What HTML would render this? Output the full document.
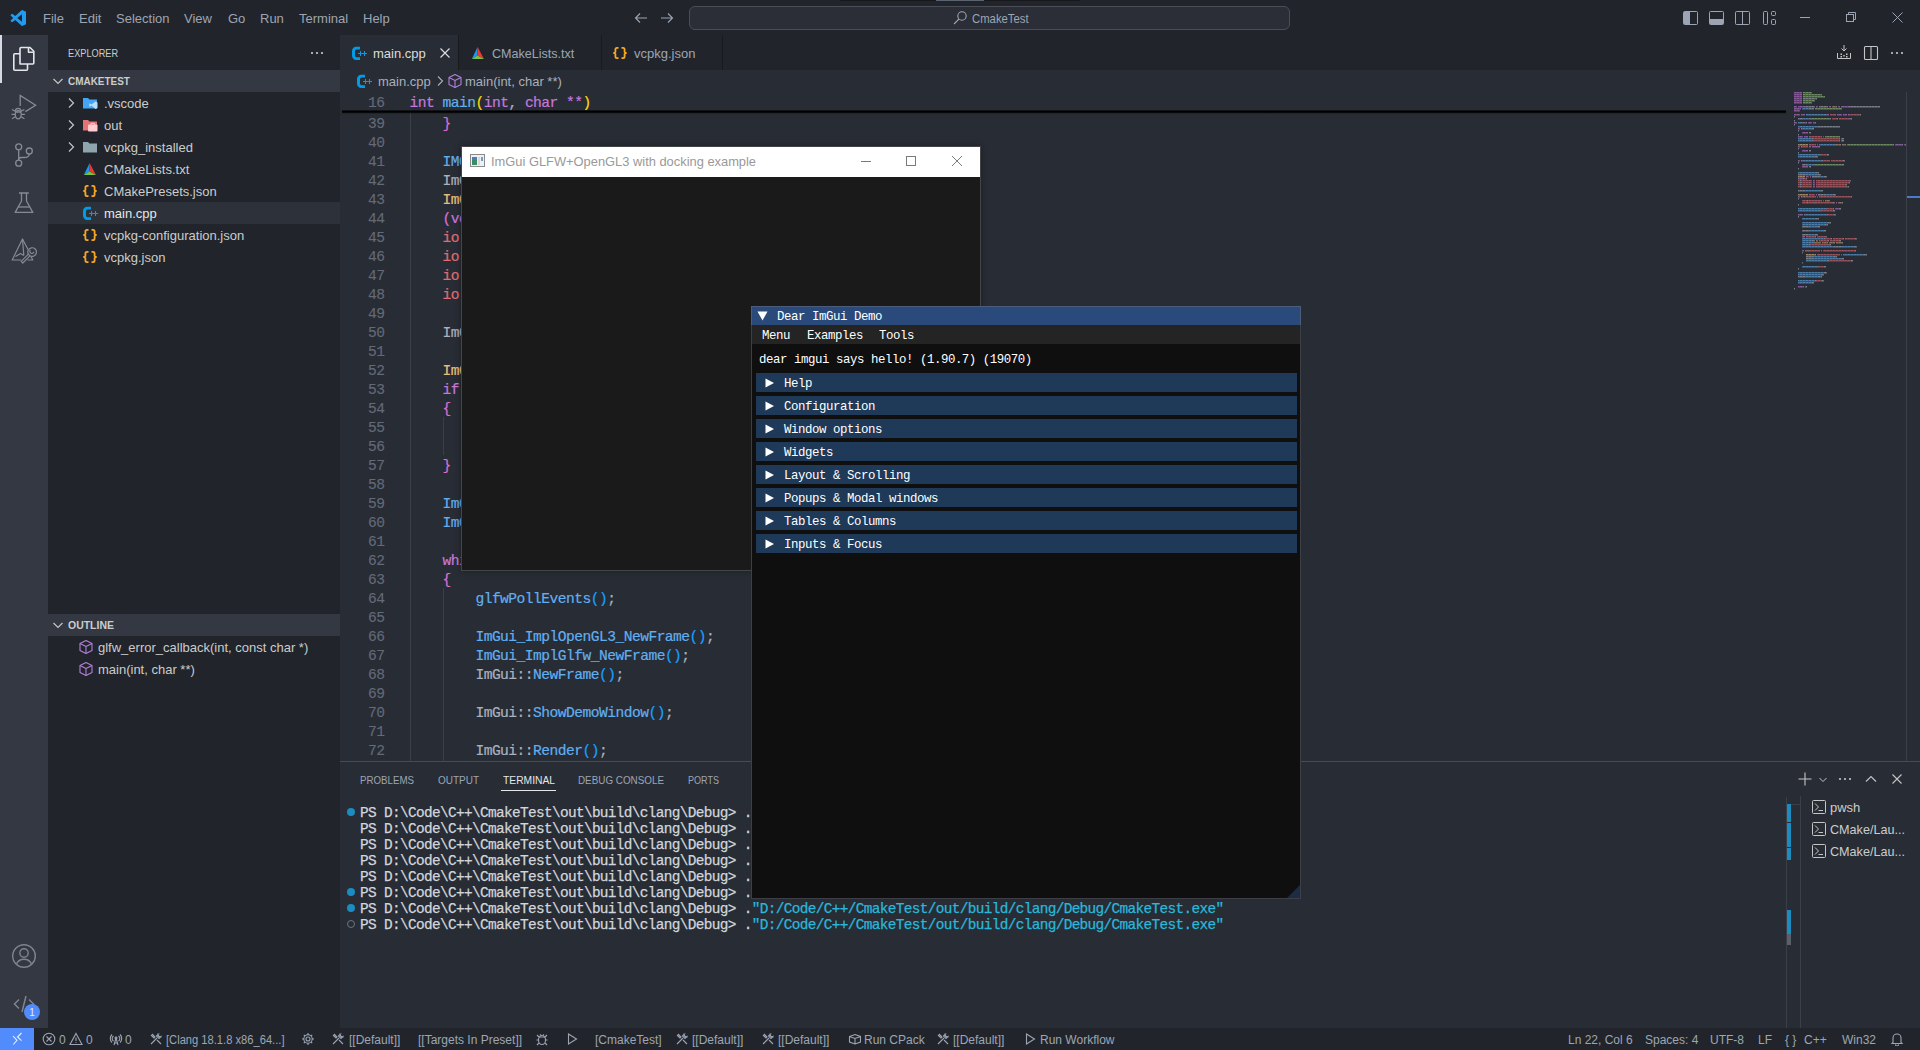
<!DOCTYPE html>
<html><head><meta charset="utf-8">
<style>
*{margin:0;padding:0;box-sizing:border-box}
html,body{width:1920px;height:1050px;overflow:hidden;background:#282c34;font-family:"Liberation Sans",sans-serif;font-size:13px;color:#9da5b4}
.a{position:absolute}
.mono{font-family:"Liberation Mono",monospace}
#title{left:0;top:0;width:1920px;height:35px;background:#21252b}
#act{left:0;top:35px;width:48px;height:993px;background:#333842}
#side{left:48px;top:35px;width:292px;height:993px;background:#21252b}
#tabs{left:340px;top:35px;width:1580px;height:35px;background:#21252b}
#editor{left:340px;top:70px;width:1580px;height:691px;background:#282c34}
#panel{left:340px;top:761px;width:1580px;height:267px;background:#282c34;border-top:1px solid #474b52}
#status{left:0;top:1028px;width:1920px;height:22px;background:#21252b}
.menu span{position:absolute;top:11px;color:#9da5b4}
.ln{position:absolute;left:340px;width:44.5px;text-align:right;color:#636a78;font-family:"Liberation Mono",monospace;font-size:14.6px;letter-spacing:-0.52px;line-height:19px;-webkit-text-stroke:0.15px currentColor}
.code{position:absolute;left:409.5px;font-family:"Liberation Mono",monospace;font-size:14.6px;letter-spacing:-0.52px;line-height:19px;white-space:pre;color:#abb2bf;-webkit-text-stroke:0.2px currentColor}
.k{color:#c678dd}.f{color:#61afef}.t{color:#e5c07b}.v{color:#e06c75}.s{color:#98c379}.p{color:#abb2bf}
.b1{color:#ffd700}.b2{color:#da70d6}.b3{color:#179fff}
.row{position:absolute;left:48px;width:292px;height:22px;line-height:22px;color:#d7dae0}
.term{position:absolute;left:360px;font-family:"Liberation Mono",monospace;font-size:14.4px;letter-spacing:-0.64px;line-height:16px;white-space:pre;color:#d2d6dc;-webkit-text-stroke:0.25px currentColor}
.sb{position:absolute;top:1029px;height:22px;line-height:22px;color:#9da5b4;font-size:12px;white-space:pre}
.ig{font-family:"Liberation Mono",monospace;font-size:12.4px;letter-spacing:-0.44px;color:#fff;white-space:pre}
</style></head><body>
<div id="title" class="a">
<svg class="a" style="left:10px;top:10px" width="16" height="16" viewBox="0 0 100 100"><path fill="#1f9cf0" fill-rule="evenodd" d="M74.9 99.3a6 6 0 0 0 4.8-.2l20.6-9.9a6.2 6.2 0 0 0 3.5-5.6V16.4a6.2 6.2 0 0 0-3.5-5.6L79.7.9a6.2 6.2 0 0 0-7.1 1.2L33.1 38.1 15.9 25.1a4.1 4.1 0 0 0-5.3.2L5.1 30.4a4.1 4.1 0 0 0 0 6.1L20 50 5.1 63.5a4.1 4.1 0 0 0 0 6.1l5.5 5a4.1 4.1 0 0 0 5.3.2l17.2-13L72.6 97.9a6.2 6.2 0 0 0 2.3 1.4ZM75 27.3 45.1 50 75 72.7Z"/></svg>
<div class="menu">
<span style="left:43px">File</span><span style="left:79px">Edit</span><span style="left:116px">Selection</span><span style="left:184px">View</span><span style="left:228px">Go</span><span style="left:260px">Run</span><span style="left:299px">Terminal</span><span style="left:363px">Help</span>
</div>
<svg class="a" style="left:633px;top:10px" width="16" height="16" viewBox="0 0 16 16" fill="none" stroke="#9da5b4" stroke-width="1.1"><path d="M14 8H2.5M7 3.5L2.5 8L7 12.5"/></svg>
<svg class="a" style="left:659px;top:10px" width="16" height="16" viewBox="0 0 16 16" fill="none" stroke="#9da5b4" stroke-width="1.1"><path d="M2 8H13.5M9 3.5L13.5 8L9 12.5"/></svg>
<div class="a" style="left:689px;top:6px;width:601px;height:24px;border:1px solid #4a4e57;border-radius:6px;background:#2b2e36"></div>
<svg class="a" style="left:952px;top:10px" width="16" height="16" viewBox="0 0 16 16" fill="none" stroke="#9da5b4" stroke-width="1.1"><circle cx="10" cy="6" r="4.2"/><path d="M7 9L2 14"/></svg>
<span class="a" style="left:972px;top:11px;color:#9da5b4;transform:scaleX(0.87);transform-origin:0 0">CmakeTest</span>
<div class="a" style="left:840px;top:0;width:240px;height:1px;background:#16181c"></div><div class="a" style="left:936px;top:0;width:48px;height:1px;background:#5b6270"></div>
<svg class="a" style="left:1683px;top:11px" width="16" height="14" viewBox="0 0 16 14" fill="none" stroke="#9da5b4" stroke-width="1"><rect x="0.5" y="0.5" width="14" height="13" rx="1"/><rect x="1" y="1" width="6" height="12" fill="#9da5b4" stroke="none"/></svg>
<svg class="a" style="left:1709px;top:11px" width="16" height="14" viewBox="0 0 16 14" fill="none" stroke="#9da5b4" stroke-width="1"><rect x="0.5" y="0.5" width="14" height="13" rx="1"/><rect x="1" y="8" width="13" height="5" fill="#9da5b4" stroke="none"/></svg>
<svg class="a" style="left:1735px;top:11px" width="16" height="14" viewBox="0 0 16 14" fill="none" stroke="#9da5b4" stroke-width="1"><rect x="0.5" y="0.5" width="14" height="13" rx="1"/><path d="M7.5 0.5V13.5"/></svg>
<svg class="a" style="left:1762px;top:11px" width="16" height="14" viewBox="0 0 16 14" fill="none" stroke="#9da5b4" stroke-width="1"><rect x="1.5" y="0.5" width="4" height="13" rx="1"/><rect x="9.5" y="0.5" width="4" height="4" rx="1"/><rect x="9.5" y="8.5" width="4" height="5" rx="1"/></svg>
<div class="a" style="left:1800px;top:17px;width:10px;height:1px;background:#9da5b4"></div>
<svg class="a" style="left:1845px;top:11px" width="12" height="12" viewBox="0 0 12 12" fill="none" stroke="#9da5b4" stroke-width="1"><rect x="1.5" y="3.5" width="7" height="7"/><path d="M3.5 3.5V1.5H10.5V8.5H8.5"/></svg>
<svg class="a" style="left:1892px;top:12px" width="11" height="11" viewBox="0 0 11 11" fill="none" stroke="#9da5b4" stroke-width="1"><path d="M0.5 0.5L10.5 10.5M10.5 0.5L0.5 10.5"/></svg>
</div>
<div id="act" class="a">
<div class="a" style="left:0;top:0;width:2px;height:48px;background:#d7dae0"></div>
<svg class="a" style="left:8px;top:7px" width="32" height="32" viewBox="0 0 32 32" fill="none" stroke="#e4e6eb" stroke-width="1.6" stroke-linejoin="round"><path d="M12 22V6.5A1 1 0 0 1 13 5.5H22L25.8 9.3V21A1 1 0 0 1 24.8 22Z"/><path d="M20.5 5.5V10.3H25.8"/><path d="M12 11.8H6.8A1 1 0 0 0 5.8 12.8V27.3A1 1 0 0 0 6.8 28.3H18.5A1 1 0 0 0 19.5 27.3V22"/></svg>
<svg class="a" style="left:8px;top:55px" width="32" height="32" viewBox="0 0 32 32" fill="none" stroke="#858b96" stroke-width="1.3" stroke-linejoin="miter"><path d="M12.2 16V5.4L27.6 15.2L17.4 21.6"/><path d="M7.2 21.5A3 3.2 0 0 1 13.2 21.5"/><ellipse cx="10.2" cy="24.6" rx="3" ry="4.2"/><path d="M7.2 22H13.2M4 19.5L7.2 21.3M3.5 24.3H7.2M4 28.8L7.3 26.8M16.4 19.5L13.2 21.3M16.9 24.3H13.2M16.4 28.8L13.1 26.8"/></svg>
<svg class="a" style="left:8px;top:103px" width="32" height="32" viewBox="0 0 32 32" fill="none" stroke="#858b96" stroke-width="1.3"><circle cx="10.7" cy="8.8" r="3"/><circle cx="10.7" cy="25.2" r="3"/><circle cx="21.3" cy="13" r="3"/><path d="M10.7 11.8V22.2M21.3 16C21.3 18.5 19.5 19.5 16 19.5H13C11.5 19.5 10.7 20.5 10.7 22"/></svg>
<svg class="a" style="left:8px;top:151px" width="32" height="32" viewBox="0 0 32 32" fill="none" stroke="#858b96" stroke-width="1.3" stroke-linejoin="round"><path d="M11 7H20.8M13.5 7V15L7.2 26.4H24.8L18.5 15V7"/><path d="M10.3 21H21.7"/></svg>
<svg class="a" style="left:8px;top:199px" width="32" height="32" viewBox="0 0 32 32" fill="none" stroke="#858b96" stroke-width="1.2" stroke-linejoin="round"><path d="M20 15.5L14.5 5L4.2 26H13M19.5 26H24.8L23 22.5"/><path d="M14.5 5L15.8 21.5M7.5 22.5L12.5 19.5L15.8 21.5"/><path d="M13.2 27.4L20.4 20.2L22 21.8L14.8 29Z"/><path d="M20.4 20.2A4.3 4.3 0 1 1 22 21.8"/><path d="M22.3 16.2A2 2 0 1 0 25.8 17.8"/></svg>
<svg class="a" style="left:11px;top:908px" width="26" height="26" viewBox="0 0 26 26" fill="none" stroke="#7f848e" stroke-width="1.4"><circle cx="13" cy="13" r="11.3"/><circle cx="13" cy="10" r="4.2"/><path d="M5.3 21.2C7 17.5 10 16.2 13 16.2S19 17.5 20.7 21.2"/></svg>
<svg class="a" style="left:12px;top:957px" width="24" height="24" viewBox="0 0 24 24" fill="none" stroke="#7f848e" stroke-width="1.5"><path d="M7 7.5L2.5 12L7 16.5M17 7.5L21.5 12L17 16.5M14 4L10 20"/></svg>
<div class="a" style="left:24px;top:969px;width:16px;height:16px;border-radius:8px;background:#528bfc;color:#e8ecf4;font-size:10px;line-height:17px;text-align:center">1</div>
</div>
<div class="a" style="left:48px;top:35px;width:292px;height:993px;background:#21252b"></div><span class="a" style="left:68px;top:47px;font-size:11px;color:#cccccc;transform:scaleX(0.835);transform-origin:0 0">EXPLORER</span><svg class="a" style="left:309px;top:45px" width="16" height="16" viewBox="0 0 16 16" fill="#cccccc"><circle cx="3" cy="8" r="1.1"/><circle cx="8" cy="8" r="1.1"/><circle cx="13" cy="8" r="1.1"/></svg><div class="a" style="left:48px;top:70px;width:292px;height:22px;background:#333842"></div><svg class="a" style="left:50px;top:73px" width="16" height="16" viewBox="0 0 16 16" fill="none" stroke="#c5c5c5" stroke-width="1.2"><path d="M3.5 6L8 10.5L12.5 6"/></svg><span class="a" style="left:68px;top:75px;font-size:11px;font-weight:bold;color:#cccccc;transform:scaleX(0.905);transform-origin:0 0">CMAKETEST</span><svg class="a" style="left:63px;top:95px" width="16" height="16" viewBox="0 0 16 16" fill="none" stroke="#c5c5c5" stroke-width="1.2"><path d="M6 3.5L10.5 8L6 12.5"/></svg><svg class="a" style="left:82px;top:95px" width="16" height="16" viewBox="0 0 16 16"><path d="M1 3H6L7.5 4.5H15V13.5H1Z" fill="#42a5f5"/><path d="M13.5 6.5L15.5 7.5V13L13.5 14L9.5 10.5L8 11.7L7.3 11.3V8.8L8 8.4L9.5 9.5Z" fill="#bbdefb"/></svg><span class="a" style="left:104px;top:96px;color:#cccccc;white-space:pre">.vscode</span><svg class="a" style="left:63px;top:117px" width="16" height="16" viewBox="0 0 16 16" fill="none" stroke="#c5c5c5" stroke-width="1.2"><path d="M6 3.5L10.5 8L6 12.5"/></svg><svg class="a" style="left:82px;top:117px" width="16" height="16" viewBox="0 0 16 16"><path d="M1 3H6L7.5 4.5H15V13.5H1Z" fill="#e57373"/><rect x="6" y="7.5" width="9.5" height="7" rx="1" fill="#ffcdd2"/><path d="M9 7.5V6.3H12.5V7.5" fill="none" stroke="#ffcdd2" stroke-width="1"/></svg><span class="a" style="left:104px;top:118px;color:#cccccc;white-space:pre">out</span><svg class="a" style="left:63px;top:139px" width="16" height="16" viewBox="0 0 16 16" fill="none" stroke="#c5c5c5" stroke-width="1.2"><path d="M6 3.5L10.5 8L6 12.5"/></svg><svg class="a" style="left:82px;top:139px" width="16" height="16" viewBox="0 0 16 16"><path d="M1 3H6L7.5 4.5H15V13.5H1Z" fill="#90a4ae"/></svg><span class="a" style="left:104px;top:140px;color:#cccccc;white-space:pre">vcpkg_installed</span><svg class="a" style="left:82px;top:161px" width="16" height="16" viewBox="0 0 16 16"><path d="M7.6 2L1.8 14L7.4 10.4Z" fill="#1e96f0"/><path d="M7.6 2L14 14L7.4 10.4Z" fill="#e83a32"/><path d="M1.8 14H14L7.4 10.4Z" fill="#7cc242"/></svg><span class="a" style="left:104px;top:162px;color:#cccccc;white-space:pre">CMakeLists.txt</span><svg class="a" style="left:82px;top:183px" width="16" height="16" viewBox="0 0 16 16" fill="none" stroke="#f9a825" stroke-width="1.8" stroke-linejoin="round"><path d="M6.5 2.8H5A1.6 1.6 0 0 0 3.4 4.4V7L2 8L3.4 9V11.6A1.6 1.6 0 0 0 5 13.2H6.5M9.5 2.8H11A1.6 1.6 0 0 1 12.6 4.4V7L14 8L12.6 9V11.6A1.6 1.6 0 0 1 11 13.2H9.5"/></svg><span class="a" style="left:104px;top:184px;color:#cccccc;white-space:pre">CMakePresets.json</span><div class="a" style="left:48px;top:202px;width:292px;height:22px;background:#2c313a"></div><svg class="a" style="left:82px;top:205px" width="16" height="16" viewBox="0 0 16 16"><path d="M9 1.8H5.2A4.2 4.2 0 0 0 1 6V10.8A4.2 4.2 0 0 0 5.2 15H9V12.2H5.6A1.6 1.6 0 0 1 4 10.6V6.2A1.6 1.6 0 0 1 5.6 4.6H9Z" fill="#039be5"/><path d="M7 8.5H16M9.5 6V11M13.5 6V11" stroke="#039be5" stroke-width="1.1"/></svg><span class="a" style="left:104px;top:206px;color:#e6e6e6;white-space:pre">main.cpp</span><svg class="a" style="left:82px;top:227px" width="16" height="16" viewBox="0 0 16 16" fill="none" stroke="#f9a825" stroke-width="1.8" stroke-linejoin="round"><path d="M6.5 2.8H5A1.6 1.6 0 0 0 3.4 4.4V7L2 8L3.4 9V11.6A1.6 1.6 0 0 0 5 13.2H6.5M9.5 2.8H11A1.6 1.6 0 0 1 12.6 4.4V7L14 8L12.6 9V11.6A1.6 1.6 0 0 1 11 13.2H9.5"/></svg><span class="a" style="left:104px;top:228px;color:#cccccc;white-space:pre">vcpkg-configuration.json</span><svg class="a" style="left:82px;top:249px" width="16" height="16" viewBox="0 0 16 16" fill="none" stroke="#f9a825" stroke-width="1.8" stroke-linejoin="round"><path d="M6.5 2.8H5A1.6 1.6 0 0 0 3.4 4.4V7L2 8L3.4 9V11.6A1.6 1.6 0 0 0 5 13.2H6.5M9.5 2.8H11A1.6 1.6 0 0 1 12.6 4.4V7L14 8L12.6 9V11.6A1.6 1.6 0 0 1 11 13.2H9.5"/></svg><span class="a" style="left:104px;top:250px;color:#cccccc;white-space:pre">vcpkg.json</span><div class="a" style="left:48px;top:614px;width:292px;height:22px;background:#333842"></div><svg class="a" style="left:50px;top:617px" width="16" height="16" viewBox="0 0 16 16" fill="none" stroke="#c5c5c5" stroke-width="1.2"><path d="M3.5 6L8 10.5L12.5 6"/></svg><span class="a" style="left:68px;top:619px;font-size:11px;font-weight:bold;color:#cccccc;transform:scaleX(0.952);transform-origin:0 0">OUTLINE</span><svg class="a" style="left:78px;top:639px" width="16" height="16" viewBox="0 0 16 16" fill="none" stroke="#b180d7" stroke-width="1.1" stroke-linejoin="round"><path d="M8 1.5L14 4.5V11.5L8 14.5L2 11.5V4.5Z"/><path d="M2 4.5L8 7.5L14 4.5M8 7.5V14.5"/></svg><span class="a" style="left:98px;top:640px;color:#cccccc;white-space:pre">glfw_error_callback(int, const char *)</span><svg class="a" style="left:78px;top:661px" width="16" height="16" viewBox="0 0 16 16" fill="none" stroke="#b180d7" stroke-width="1.1" stroke-linejoin="round"><path d="M8 1.5L14 4.5V11.5L8 14.5L2 11.5V4.5Z"/><path d="M2 4.5L8 7.5L14 4.5M8 7.5V14.5"/></svg><span class="a" style="left:98px;top:662px;color:#cccccc;white-space:pre">main(int, char **)</span>
<div id="tabs" class="a"></div>
<div id="editor" class="a"></div>
<div class="a" style="left:340px;top:35px;width:119px;height:35px;background:#282c34;border-right:1px solid #181a1f"></div><div class="a" style="left:459px;top:35px;width:143px;height:35px;border-right:1px solid #181a1f"></div><div class="a" style="left:602px;top:35px;width:121px;height:35px;border-right:1px solid #181a1f"></div><svg class="a" style="left:351px;top:45px" width="16" height="16" viewBox="0 0 16 16"><path d="M9 1.8H5.2A4.2 4.2 0 0 0 1 6V10.8A4.2 4.2 0 0 0 5.2 15H9V12.2H5.6A1.6 1.6 0 0 1 4 10.6V6.2A1.6 1.6 0 0 1 5.6 4.6H9Z" fill="#039be5"/><path d="M7 8.5H16M9.5 6V11M13.5 6V11" stroke="#039be5" stroke-width="1.1"/></svg><span class="a" style="left:373px;top:46px;color:#dcdcdc">main.cpp</span><svg class="a" style="left:437px;top:45px" width="16" height="16" viewBox="0 0 16 16" fill="none" stroke="#dcdcdc" stroke-width="1.2"><path d="M3.5 3.5L12.5 12.5M12.5 3.5L3.5 12.5"/></svg><svg class="a" style="left:470px;top:45px" width="16" height="16" viewBox="0 0 16 16"><path d="M7.6 2L1.8 14L7.4 10.4Z" fill="#1e96f0"/><path d="M7.6 2L14 14L7.4 10.4Z" fill="#e83a32"/><path d="M1.8 14H14L7.4 10.4Z" fill="#7cc242"/></svg><span class="a" style="left:492px;top:46px;color:#9da5b4;transform:scaleX(0.965);transform-origin:0 0">CMakeLists.txt</span><svg class="a" style="left:612px;top:45px" width="16" height="16" viewBox="0 0 16 16" fill="none" stroke="#f9a825" stroke-width="1.8" stroke-linejoin="round"><path d="M6.5 2.8H5A1.6 1.6 0 0 0 3.4 4.4V7L2 8L3.4 9V11.6A1.6 1.6 0 0 0 5 13.2H6.5M9.5 2.8H11A1.6 1.6 0 0 1 12.6 4.4V7L14 8L12.6 9V11.6A1.6 1.6 0 0 1 11 13.2H9.5"/></svg><span class="a" style="left:634px;top:46px;color:#9da5b4">vcpkg.json</span><svg class="a" style="left:1836px;top:44px" width="16" height="16" viewBox="0 0 16 16" fill="none" stroke="#c5c5c5" stroke-width="1"><path d="M1.5 9V14.5H14.5V9M8 1V7M5.5 4.5L8 7L10.5 4.5"/><rect x="4.5" y="9.5" width="1.5" height="1.5" fill="#c5c5c5" stroke="none"/><rect x="10" y="9.5" width="1.5" height="1.5" fill="#c5c5c5" stroke="none"/><rect x="7.3" y="11" width="1.5" height="1.5" fill="#c5c5c5" stroke="none"/><rect x="4.5" y="12" width="1.5" height="1.5" fill="#c5c5c5" stroke="none"/><rect x="10" y="12" width="1.5" height="1.5" fill="#c5c5c5" stroke="none"/></svg><svg class="a" style="left:1863px;top:45px" width="16" height="16" viewBox="0 0 16 16" fill="none" stroke="#c5c5c5" stroke-width="1.1"><rect x="1.5" y="1.5" width="13" height="13" rx="1"/><path d="M8 1.5V14.5"/></svg><svg class="a" style="left:1889px;top:45px" width="16" height="16" viewBox="0 0 16 16" fill="#c5c5c5"><circle cx="3" cy="8" r="1.1"/><circle cx="8" cy="8" r="1.1"/><circle cx="13" cy="8" r="1.1"/></svg><svg class="a" style="left:356px;top:73px" width="16" height="16" viewBox="0 0 16 16"><path d="M9 1.8H5.2A4.2 4.2 0 0 0 1 6V10.8A4.2 4.2 0 0 0 5.2 15H9V12.2H5.6A1.6 1.6 0 0 1 4 10.6V6.2A1.6 1.6 0 0 1 5.6 4.6H9Z" fill="#039be5"/><path d="M7 8.5H16M9.5 6V11M13.5 6V11" stroke="#039be5" stroke-width="1.1"/></svg><span class="a" style="left:378px;top:74px;color:#a9b0bc">main.cpp</span><svg class="a" style="left:432px;top:73px" width="16" height="16" viewBox="0 0 16 16" fill="none" stroke="#a9b0bc" stroke-width="1.1"><path d="M6 3.5L10.5 8L6 12.5"/></svg><svg class="a" style="left:447px;top:73px" width="16" height="16" viewBox="0 0 16 16" fill="none" stroke="#b180d7" stroke-width="1.1" stroke-linejoin="round"><path d="M8 1.5L14 4.5V11.5L8 14.5L2 11.5V4.5Z"/><path d="M2 4.5L8 7.5L14 4.5M8 7.5V14.5"/></svg><span class="a" style="left:465px;top:74px;color:#a9b0bc">main(int, char **)</span><div class="a" style="left:410px;top:112px;width:1px;height:649px;background:#3b4048"></div><div class="a" style="left:443px;top:417px;width:1px;height:38px;background:#3b4048"></div><div class="a" style="left:443px;top:588px;width:1px;height:173px;background:#3b4048"></div><div class="ln" style="top:115px">39</div><div class="code" style="top:115px"><span class="p">    </span><span class="b2">}</span></div><div class="ln" style="top:134px">40</div><div class="code" style="top:134px"></div><div class="ln" style="top:153px">41</div><div class="code" style="top:153px"><span class="p">    </span><span class="f">IMGUI_CHECKVERSION</span><span class="b2">(</span><span class="b2">)</span><span class="p">;</span></div><div class="ln" style="top:172px">42</div><div class="code" style="top:172px"><span class="p">    ImGui::</span><span class="f">CreateContext</span><span class="b2">()</span><span class="p">;</span></div><div class="ln" style="top:191px">43</div><div class="code" style="top:191px"><span class="p">    </span><span class="t">ImGuiIO</span><span class="k">&amp;</span><span class="p"> </span><span class="v">io</span><span class="p"> </span><span class="k">=</span><span class="p"> ImGui::</span><span class="f">GetIO</span><span class="b2">()</span><span class="p">;</span></div><div class="ln" style="top:210px">44</div><div class="code" style="top:210px"><span class="p">    </span><span class="b2">(</span><span class="k">void</span><span class="b2">)</span><span class="v">io</span><span class="p">;</span></div><div class="ln" style="top:229px">45</div><div class="code" style="top:229px"><span class="p">    </span><span class="v">io</span><span class="p">.</span><span class="v">ConfigFlags</span><span class="p"> </span><span class="k">|=</span><span class="p"> </span><span class="t">ImGuiConfigFlags_NavEnableKeyboard</span><span class="p">;</span></div><div class="ln" style="top:248px">46</div><div class="code" style="top:248px"><span class="p">    </span><span class="v">io</span><span class="p">.</span><span class="v">ConfigFlags</span><span class="p"> </span><span class="k">|=</span><span class="p"> </span><span class="t">ImGuiConfigFlags_NavEnableGamepad</span><span class="p">;</span></div><div class="ln" style="top:267px">47</div><div class="code" style="top:267px"><span class="p">    </span><span class="v">io</span><span class="p">.</span><span class="v">ConfigFlags</span><span class="p"> </span><span class="k">|=</span><span class="p"> </span><span class="t">ImGuiConfigFlags_DockingEnable</span><span class="p">;</span></div><div class="ln" style="top:286px">48</div><div class="code" style="top:286px"><span class="p">    </span><span class="v">io</span><span class="p">.</span><span class="v">ConfigFlags</span><span class="p"> </span><span class="k">|=</span><span class="p"> </span><span class="t">ImGuiConfigFlags_ViewportsEnable</span><span class="p">;</span></div><div class="ln" style="top:305px">49</div><div class="code" style="top:305px"></div><div class="ln" style="top:324px">50</div><div class="code" style="top:324px"><span class="p">    ImGui::</span><span class="f">StyleColorsDark</span><span class="b2">()</span><span class="p">;</span></div><div class="ln" style="top:343px">51</div><div class="code" style="top:343px"></div><div class="ln" style="top:362px">52</div><div class="code" style="top:362px"><span class="p">    </span><span class="t">ImGuiStyle</span><span class="k">&amp;</span><span class="p"> </span><span class="v">style</span><span class="p"> </span><span class="k">=</span><span class="p"> ImGui::</span><span class="f">GetStyle</span><span class="b2">()</span><span class="p">;</span></div><div class="ln" style="top:381px">53</div><div class="code" style="top:381px"><span class="p">    </span><span class="k">if</span><span class="p"> </span><span class="b2">(</span><span class="v">io</span><span class="p">.</span><span class="v">ConfigFlags</span><span class="p"> </span><span class="k">&amp;</span><span class="p"> </span><span class="t">ImGuiConfigFlags_ViewportsEnable</span><span class="b2">)</span></div><div class="ln" style="top:400px">54</div><div class="code" style="top:400px"><span class="p">    </span><span class="b2">{</span></div><div class="ln" style="top:419px">55</div><div class="code" style="top:419px"><span class="p">        </span><span class="v">style</span><span class="p">.</span><span class="v">WindowRounding</span><span class="p"> = </span><span class="t">0.0f</span><span class="p">;</span></div><div class="ln" style="top:438px">56</div><div class="code" style="top:438px"><span class="p">        </span><span class="v">style</span><span class="p">.</span><span class="v">Colors</span><span class="b3">[</span><span class="t">ImGuiCol_WindowBg</span><span class="b3">]</span><span class="p">.w = 1.0f;</span></div><div class="ln" style="top:457px">57</div><div class="code" style="top:457px"><span class="p">    </span><span class="b2">}</span></div><div class="ln" style="top:476px">58</div><div class="code" style="top:476px"></div><div class="ln" style="top:495px">59</div><div class="code" style="top:495px"><span class="p">    </span><span class="f">ImGui_ImplGlfw_InitForOpenGL</span><span class="b2">(</span><span class="v">window</span><span class="p">, </span><span class="t">true</span><span class="b2">)</span><span class="p">;</span></div><div class="ln" style="top:514px">60</div><div class="code" style="top:514px"><span class="p">    </span><span class="f">ImGui_ImplOpenGL3_Init</span><span class="b2">(</span><span class="v">glsl_version</span><span class="b2">)</span><span class="p">;</span></div><div class="ln" style="top:533px">61</div><div class="code" style="top:533px"></div><div class="ln" style="top:552px">62</div><div class="code" style="top:552px"><span class="p">    </span><span class="k">while</span><span class="p"> </span><span class="b2">(</span><span class="k">!</span><span class="f">glfwWindowShouldClose</span><span class="b3">(</span><span class="v">window</span><span class="b3">)</span><span class="b2">)</span></div><div class="ln" style="top:571px">63</div><div class="code" style="top:571px"><span class="p">    </span><span class="b2">{</span></div><div class="ln" style="top:590px">64</div><div class="code" style="top:590px"><span class="p">        </span><span class="f">glfwPollEvents</span><span class="b3">()</span><span class="p">;</span></div><div class="ln" style="top:609px">65</div><div class="code" style="top:609px"></div><div class="ln" style="top:628px">66</div><div class="code" style="top:628px"><span class="p">        </span><span class="f">ImGui_ImplOpenGL3_NewFrame</span><span class="b3">()</span><span class="p">;</span></div><div class="ln" style="top:647px">67</div><div class="code" style="top:647px"><span class="p">        </span><span class="f">ImGui_ImplGlfw_NewFrame</span><span class="b3">()</span><span class="p">;</span></div><div class="ln" style="top:666px">68</div><div class="code" style="top:666px"><span class="p">        ImGui::</span><span class="f">NewFrame</span><span class="b3">()</span><span class="p">;</span></div><div class="ln" style="top:685px">69</div><div class="code" style="top:685px"></div><div class="ln" style="top:704px">70</div><div class="code" style="top:704px"><span class="p">        ImGui::</span><span class="f">ShowDemoWindow</span><span class="b3">()</span><span class="p">;</span></div><div class="ln" style="top:723px">71</div><div class="code" style="top:723px"></div><div class="ln" style="top:742px">72</div><div class="code" style="top:742px"><span class="p">        ImGui::</span><span class="f">Render</span><span class="b3">()</span><span class="p">;</span></div><div class="a" style="left:340px;top:92px;width:1446px;height:19px;background:#282c34"></div><div class="a" style="left:342px;top:110px;width:1444px;height:4px;background:linear-gradient(rgba(0,0,0,0.25) 0,#000 30%,#000 55%,rgba(0,0,0,0.3) 80%,rgba(0,0,0,0) 100%)"></div><div class="ln" style="top:94px">16</div><div class="code" style="top:94px"><span class="k">int</span><span class="p"> </span><span class="f">main</span><span class="b1">(</span><span class="k">int</span><span class="p">, </span><span class="k">char</span><span class="p"> </span><span class="k">**</span><span class="b1">)</span></div>
<svg class="a" style="left:1794px;top:92px" width="112" height="198"><defs><pattern id="mmp" width="3" height="2" patternUnits="userSpaceOnUse"><rect x="0" y="1" width="3" height="1" fill="#282c34" fill-opacity="0.55"/><rect x="2" y="0" width="1" height="1" fill="#282c34" fill-opacity="0.3"/></pattern></defs><g opacity="0.62"><rect x="0" y="0" width="8" height="2" fill="#c678dd"/><rect x="9" y="0" width="9" height="2" fill="#98c379"/><rect x="0" y="2" width="8" height="2" fill="#c678dd"/><rect x="9" y="2" width="19" height="2" fill="#98c379"/><rect x="0" y="4" width="8" height="2" fill="#c678dd"/><rect x="9" y="4" width="22" height="2" fill="#98c379"/><rect x="0" y="6" width="8" height="2" fill="#c678dd"/><rect x="9" y="6" width="1" height="2" fill="#abb2bf"/><rect x="10" y="6" width="4" height="2" fill="#abb2bf"/><rect x="14" y="6" width="1" height="2" fill="#abb2bf"/><rect x="15" y="6" width="5" height="2" fill="#abb2bf"/><rect x="20" y="6" width="1" height="2" fill="#abb2bf"/><rect x="21" y="6" width="1" height="2" fill="#e06c75"/><rect x="22" y="6" width="1" height="2" fill="#abb2bf"/><rect x="0" y="8" width="8" height="2" fill="#c678dd"/><rect x="9" y="8" width="12" height="2" fill="#98c379"/><rect x="0" y="10" width="8" height="2" fill="#c678dd"/><rect x="9" y="10" width="9" height="2" fill="#98c379"/><rect x="0" y="14" width="3" height="2" fill="#c678dd"/><rect x="4" y="14" width="7" height="2" fill="#c678dd"/><rect x="11" y="14" width="1" height="2" fill="#abb2bf"/><rect x="12" y="14" width="8" height="2" fill="#abb2bf"/><rect x="20" y="14" width="1" height="2" fill="#abb2bf"/><rect x="22" y="14" width="1" height="2" fill="#c678dd"/><rect x="23" y="14" width="1" height="2" fill="#c678dd"/><rect x="25" y="14" width="1" height="2" fill="#abb2bf"/><rect x="26" y="14" width="8" height="2" fill="#abb2bf"/><rect x="35" y="14" width="1" height="2" fill="#abb2bf"/><rect x="36" y="14" width="1" height="2" fill="#c678dd"/><rect x="38" y="14" width="4" height="2" fill="#d19a66"/><rect x="42" y="14" width="1" height="2" fill="#abb2bf"/><rect x="44" y="14" width="1" height="2" fill="#c678dd"/><rect x="45" y="14" width="1" height="2" fill="#c678dd"/><rect x="47" y="14" width="1" height="2" fill="#c678dd"/><rect x="48" y="14" width="7" height="2" fill="#c678dd"/><rect x="55" y="14" width="1" height="2" fill="#abb2bf"/><rect x="56" y="14" width="29" height="2" fill="#abb2bf"/><rect x="85" y="14" width="1" height="2" fill="#abb2bf"/><rect x="0" y="16" width="7" height="2" fill="#c678dd"/><rect x="8" y="16" width="7" height="2" fill="#61afef"/><rect x="15" y="16" width="1" height="2" fill="#abb2bf"/><rect x="16" y="16" width="3" height="2" fill="#abb2bf"/><rect x="19" y="16" width="1" height="2" fill="#abb2bf"/><rect x="21" y="16" width="26" height="2" fill="#98c379"/><rect x="47" y="16" width="1" height="2" fill="#abb2bf"/><rect x="0" y="18" width="6" height="2" fill="#c678dd"/><rect x="0" y="22" width="6" height="2" fill="#c678dd"/><rect x="7" y="22" width="4" height="2" fill="#c678dd"/><rect x="12" y="22" width="19" height="2" fill="#61afef"/><rect x="31" y="22" width="1" height="2" fill="#abb2bf"/><rect x="32" y="22" width="3" height="2" fill="#c678dd"/><rect x="36" y="22" width="5" height="2" fill="#e06c75"/><rect x="41" y="22" width="1" height="2" fill="#abb2bf"/><rect x="43" y="22" width="5" height="2" fill="#c678dd"/><rect x="49" y="22" width="4" height="2" fill="#c678dd"/><rect x="54" y="22" width="1" height="2" fill="#c678dd"/><rect x="55" y="22" width="11" height="2" fill="#e06c75"/><rect x="66" y="22" width="1" height="2" fill="#abb2bf"/><rect x="0" y="24" width="1" height="2" fill="#abb2bf"/><rect x="4" y="26" width="3" height="2" fill="#abb2bf"/><rect x="7" y="26" width="1" height="2" fill="#abb2bf"/><rect x="8" y="26" width="1" height="2" fill="#abb2bf"/><rect x="9" y="26" width="7" height="2" fill="#61afef"/><rect x="16" y="26" width="1" height="2" fill="#abb2bf"/><rect x="17" y="26" width="19" height="2" fill="#98c379"/><rect x="36" y="26" width="1" height="2" fill="#abb2bf"/><rect x="38" y="26" width="5" height="2" fill="#e06c75"/><rect x="43" y="26" width="1" height="2" fill="#abb2bf"/><rect x="45" y="26" width="11" height="2" fill="#e06c75"/><rect x="56" y="26" width="1" height="2" fill="#abb2bf"/><rect x="57" y="26" width="1" height="2" fill="#abb2bf"/><rect x="0" y="28" width="1" height="2" fill="#abb2bf"/><rect x="0" y="30" width="3" height="2" fill="#c678dd"/><rect x="4" y="30" width="4" height="2" fill="#61afef"/><rect x="8" y="30" width="1" height="2" fill="#abb2bf"/><rect x="9" y="30" width="3" height="2" fill="#c678dd"/><rect x="12" y="30" width="1" height="2" fill="#abb2bf"/><rect x="14" y="30" width="4" height="2" fill="#c678dd"/><rect x="19" y="30" width="1" height="2" fill="#c678dd"/><rect x="20" y="30" width="1" height="2" fill="#c678dd"/><rect x="21" y="30" width="1" height="2" fill="#abb2bf"/><rect x="0" y="32" width="1" height="2" fill="#abb2bf"/><rect x="4" y="34" width="20" height="2" fill="#61afef"/><rect x="24" y="34" width="1" height="2" fill="#abb2bf"/><rect x="25" y="34" width="19" height="2" fill="#abb2bf"/><rect x="44" y="34" width="1" height="2" fill="#abb2bf"/><rect x="45" y="34" width="1" height="2" fill="#abb2bf"/><rect x="4" y="36" width="2" height="2" fill="#c678dd"/><rect x="7" y="36" width="1" height="2" fill="#abb2bf"/><rect x="8" y="36" width="1" height="2" fill="#c678dd"/><rect x="9" y="36" width="8" height="2" fill="#61afef"/><rect x="17" y="36" width="1" height="2" fill="#abb2bf"/><rect x="18" y="36" width="1" height="2" fill="#abb2bf"/><rect x="19" y="36" width="1" height="2" fill="#abb2bf"/><rect x="4" y="38" width="1" height="2" fill="#abb2bf"/><rect x="8" y="40" width="6" height="2" fill="#c678dd"/><rect x="15" y="40" width="1" height="2" fill="#d19a66"/><rect x="16" y="40" width="1" height="2" fill="#abb2bf"/><rect x="4" y="42" width="1" height="2" fill="#abb2bf"/><rect x="4" y="44" width="5" height="2" fill="#c678dd"/><rect x="10" y="44" width="4" height="2" fill="#c678dd"/><rect x="15" y="44" width="1" height="2" fill="#c678dd"/><rect x="16" y="44" width="12" height="2" fill="#e06c75"/><rect x="29" y="44" width="1" height="2" fill="#c678dd"/><rect x="31" y="44" width="14" height="2" fill="#98c379"/><rect x="45" y="44" width="1" height="2" fill="#abb2bf"/><rect x="4" y="46" width="14" height="2" fill="#61afef"/><rect x="18" y="46" width="1" height="2" fill="#abb2bf"/><rect x="19" y="46" width="26" height="2" fill="#e06c75"/><rect x="45" y="46" width="1" height="2" fill="#abb2bf"/><rect x="47" y="46" width="1" height="2" fill="#d19a66"/><rect x="48" y="46" width="1" height="2" fill="#abb2bf"/><rect x="49" y="46" width="1" height="2" fill="#abb2bf"/><rect x="4" y="48" width="14" height="2" fill="#61afef"/><rect x="18" y="48" width="1" height="2" fill="#abb2bf"/><rect x="19" y="48" width="26" height="2" fill="#e06c75"/><rect x="45" y="48" width="1" height="2" fill="#abb2bf"/><rect x="47" y="48" width="1" height="2" fill="#d19a66"/><rect x="48" y="48" width="1" height="2" fill="#abb2bf"/><rect x="49" y="48" width="1" height="2" fill="#abb2bf"/><rect x="4" y="52" width="10" height="2" fill="#e5c07b"/><rect x="15" y="52" width="1" height="2" fill="#c678dd"/><rect x="16" y="52" width="6" height="2" fill="#e06c75"/><rect x="23" y="52" width="1" height="2" fill="#c678dd"/><rect x="25" y="52" width="16" height="2" fill="#61afef"/><rect x="41" y="52" width="1" height="2" fill="#abb2bf"/><rect x="42" y="52" width="4" height="2" fill="#d19a66"/><rect x="46" y="52" width="1" height="2" fill="#abb2bf"/><rect x="48" y="52" width="3" height="2" fill="#d19a66"/><rect x="51" y="52" width="1" height="2" fill="#abb2bf"/><rect x="53" y="52" width="46" height="2" fill="#98c379"/><rect x="99" y="52" width="1" height="2" fill="#abb2bf"/><rect x="101" y="52" width="7" height="2" fill="#c678dd"/><rect x="108" y="52" width="1" height="2" fill="#abb2bf"/><rect x="110" y="52" width="2" height="2" fill="#c678dd"/><rect x="4" y="54" width="2" height="2" fill="#c678dd"/><rect x="7" y="54" width="1" height="2" fill="#abb2bf"/><rect x="8" y="54" width="6" height="2" fill="#e06c75"/><rect x="15" y="54" width="1" height="2" fill="#c678dd"/><rect x="16" y="54" width="1" height="2" fill="#c678dd"/><rect x="18" y="54" width="7" height="2" fill="#c678dd"/><rect x="25" y="54" width="1" height="2" fill="#abb2bf"/><rect x="4" y="56" width="1" height="2" fill="#abb2bf"/><rect x="8" y="58" width="6" height="2" fill="#c678dd"/><rect x="15" y="58" width="1" height="2" fill="#d19a66"/><rect x="16" y="58" width="1" height="2" fill="#abb2bf"/><rect x="4" y="60" width="1" height="2" fill="#abb2bf"/><rect x="4" y="62" width="22" height="2" fill="#61afef"/><rect x="26" y="62" width="1" height="2" fill="#abb2bf"/><rect x="27" y="62" width="6" height="2" fill="#e06c75"/><rect x="33" y="62" width="1" height="2" fill="#abb2bf"/><rect x="34" y="62" width="1" height="2" fill="#abb2bf"/><rect x="4" y="64" width="16" height="2" fill="#61afef"/><rect x="20" y="64" width="1" height="2" fill="#abb2bf"/><rect x="21" y="64" width="1" height="2" fill="#d19a66"/><rect x="22" y="64" width="1" height="2" fill="#abb2bf"/><rect x="23" y="64" width="1" height="2" fill="#abb2bf"/><rect x="4" y="68" width="2" height="2" fill="#c678dd"/><rect x="7" y="68" width="1" height="2" fill="#abb2bf"/><rect x="8" y="68" width="1" height="2" fill="#c678dd"/><rect x="9" y="68" width="19" height="2" fill="#61afef"/><rect x="28" y="68" width="1" height="2" fill="#abb2bf"/><rect x="29" y="68" width="6" height="2" fill="#e06c75"/><rect x="35" y="68" width="1" height="2" fill="#abb2bf"/><rect x="37" y="68" width="12" height="2" fill="#e06c75"/><rect x="49" y="68" width="1" height="2" fill="#abb2bf"/><rect x="50" y="68" width="1" height="2" fill="#abb2bf"/><rect x="4" y="70" width="1" height="2" fill="#abb2bf"/><rect x="8" y="72" width="3" height="2" fill="#abb2bf"/><rect x="11" y="72" width="1" height="2" fill="#abb2bf"/><rect x="12" y="72" width="1" height="2" fill="#abb2bf"/><rect x="13" y="72" width="7" height="2" fill="#61afef"/><rect x="20" y="72" width="1" height="2" fill="#abb2bf"/><rect x="21" y="72" width="27" height="2" fill="#98c379"/><rect x="48" y="72" width="1" height="2" fill="#abb2bf"/><rect x="49" y="72" width="1" height="2" fill="#abb2bf"/><rect x="8" y="74" width="6" height="2" fill="#c678dd"/><rect x="15" y="74" width="1" height="2" fill="#d19a66"/><rect x="16" y="74" width="1" height="2" fill="#abb2bf"/><rect x="4" y="76" width="1" height="2" fill="#abb2bf"/><rect x="4" y="80" width="18" height="2" fill="#61afef"/><rect x="22" y="80" width="1" height="2" fill="#abb2bf"/><rect x="23" y="80" width="1" height="2" fill="#abb2bf"/><rect x="24" y="80" width="1" height="2" fill="#abb2bf"/><rect x="4" y="82" width="5" height="2" fill="#abb2bf"/><rect x="9" y="82" width="1" height="2" fill="#abb2bf"/><rect x="10" y="82" width="1" height="2" fill="#abb2bf"/><rect x="11" y="82" width="13" height="2" fill="#61afef"/><rect x="24" y="82" width="1" height="2" fill="#abb2bf"/><rect x="25" y="82" width="1" height="2" fill="#abb2bf"/><rect x="26" y="82" width="1" height="2" fill="#abb2bf"/><rect x="4" y="84" width="7" height="2" fill="#e5c07b"/><rect x="12" y="84" width="1" height="2" fill="#c678dd"/><rect x="13" y="84" width="2" height="2" fill="#e06c75"/><rect x="16" y="84" width="1" height="2" fill="#c678dd"/><rect x="18" y="84" width="5" height="2" fill="#abb2bf"/><rect x="23" y="84" width="1" height="2" fill="#abb2bf"/><rect x="24" y="84" width="1" height="2" fill="#abb2bf"/><rect x="25" y="84" width="5" height="2" fill="#61afef"/><rect x="30" y="84" width="1" height="2" fill="#abb2bf"/><rect x="31" y="84" width="1" height="2" fill="#abb2bf"/><rect x="32" y="84" width="1" height="2" fill="#abb2bf"/><rect x="4" y="86" width="1" height="2" fill="#abb2bf"/><rect x="5" y="86" width="4" height="2" fill="#c678dd"/><rect x="9" y="86" width="1" height="2" fill="#abb2bf"/><rect x="10" y="86" width="2" height="2" fill="#e06c75"/><rect x="12" y="86" width="1" height="2" fill="#abb2bf"/><rect x="4" y="88" width="2" height="2" fill="#e06c75"/><rect x="6" y="88" width="1" height="2" fill="#abb2bf"/><rect x="7" y="88" width="11" height="2" fill="#e06c75"/><rect x="19" y="88" width="1" height="2" fill="#c678dd"/><rect x="20" y="88" width="1" height="2" fill="#c678dd"/><rect x="22" y="88" width="34" height="2" fill="#e06c75"/><rect x="56" y="88" width="1" height="2" fill="#abb2bf"/><rect x="4" y="90" width="2" height="2" fill="#e06c75"/><rect x="6" y="90" width="1" height="2" fill="#abb2bf"/><rect x="7" y="90" width="11" height="2" fill="#e06c75"/><rect x="19" y="90" width="1" height="2" fill="#c678dd"/><rect x="20" y="90" width="1" height="2" fill="#c678dd"/><rect x="22" y="90" width="33" height="2" fill="#e06c75"/><rect x="55" y="90" width="1" height="2" fill="#abb2bf"/><rect x="4" y="92" width="2" height="2" fill="#e06c75"/><rect x="6" y="92" width="1" height="2" fill="#abb2bf"/><rect x="7" y="92" width="11" height="2" fill="#e06c75"/><rect x="19" y="92" width="1" height="2" fill="#c678dd"/><rect x="20" y="92" width="1" height="2" fill="#c678dd"/><rect x="22" y="92" width="30" height="2" fill="#e06c75"/><rect x="52" y="92" width="1" height="2" fill="#abb2bf"/><rect x="4" y="94" width="2" height="2" fill="#e06c75"/><rect x="6" y="94" width="1" height="2" fill="#abb2bf"/><rect x="7" y="94" width="11" height="2" fill="#e06c75"/><rect x="19" y="94" width="1" height="2" fill="#c678dd"/><rect x="20" y="94" width="1" height="2" fill="#c678dd"/><rect x="22" y="94" width="32" height="2" fill="#e06c75"/><rect x="54" y="94" width="1" height="2" fill="#abb2bf"/><rect x="4" y="98" width="5" height="2" fill="#abb2bf"/><rect x="9" y="98" width="1" height="2" fill="#abb2bf"/><rect x="10" y="98" width="1" height="2" fill="#abb2bf"/><rect x="11" y="98" width="15" height="2" fill="#61afef"/><rect x="26" y="98" width="1" height="2" fill="#abb2bf"/><rect x="27" y="98" width="1" height="2" fill="#abb2bf"/><rect x="28" y="98" width="1" height="2" fill="#abb2bf"/><rect x="4" y="102" width="10" height="2" fill="#e5c07b"/><rect x="15" y="102" width="1" height="2" fill="#c678dd"/><rect x="16" y="102" width="5" height="2" fill="#e06c75"/><rect x="22" y="102" width="1" height="2" fill="#c678dd"/><rect x="24" y="102" width="5" height="2" fill="#abb2bf"/><rect x="29" y="102" width="1" height="2" fill="#abb2bf"/><rect x="30" y="102" width="1" height="2" fill="#abb2bf"/><rect x="31" y="102" width="8" height="2" fill="#61afef"/><rect x="39" y="102" width="1" height="2" fill="#abb2bf"/><rect x="40" y="102" width="1" height="2" fill="#abb2bf"/><rect x="41" y="102" width="1" height="2" fill="#abb2bf"/><rect x="4" y="104" width="2" height="2" fill="#c678dd"/><rect x="7" y="104" width="1" height="2" fill="#abb2bf"/><rect x="8" y="104" width="2" height="2" fill="#e06c75"/><rect x="10" y="104" width="1" height="2" fill="#abb2bf"/><rect x="11" y="104" width="11" height="2" fill="#e06c75"/><rect x="23" y="104" width="1" height="2" fill="#c678dd"/><rect x="25" y="104" width="32" height="2" fill="#e06c75"/><rect x="57" y="104" width="1" height="2" fill="#abb2bf"/><rect x="4" y="106" width="1" height="2" fill="#abb2bf"/><rect x="8" y="108" width="5" height="2" fill="#e06c75"/><rect x="13" y="108" width="1" height="2" fill="#abb2bf"/><rect x="14" y="108" width="14" height="2" fill="#e06c75"/><rect x="29" y="108" width="1" height="2" fill="#c678dd"/><rect x="31" y="108" width="4" height="2" fill="#d19a66"/><rect x="35" y="108" width="1" height="2" fill="#abb2bf"/><rect x="8" y="110" width="5" height="2" fill="#e06c75"/><rect x="13" y="110" width="1" height="2" fill="#abb2bf"/><rect x="14" y="110" width="6" height="2" fill="#e06c75"/><rect x="20" y="110" width="1" height="2" fill="#abb2bf"/><rect x="21" y="110" width="17" height="2" fill="#e06c75"/><rect x="38" y="110" width="1" height="2" fill="#abb2bf"/><rect x="39" y="110" width="1" height="2" fill="#abb2bf"/><rect x="40" y="110" width="1" height="2" fill="#e06c75"/><rect x="42" y="110" width="1" height="2" fill="#c678dd"/><rect x="44" y="110" width="4" height="2" fill="#d19a66"/><rect x="48" y="110" width="1" height="2" fill="#abb2bf"/><rect x="4" y="112" width="1" height="2" fill="#abb2bf"/><rect x="4" y="116" width="28" height="2" fill="#61afef"/><rect x="32" y="116" width="1" height="2" fill="#abb2bf"/><rect x="33" y="116" width="6" height="2" fill="#e06c75"/><rect x="39" y="116" width="1" height="2" fill="#abb2bf"/><rect x="41" y="116" width="4" height="2" fill="#c678dd"/><rect x="45" y="116" width="1" height="2" fill="#abb2bf"/><rect x="46" y="116" width="1" height="2" fill="#abb2bf"/><rect x="4" y="118" width="22" height="2" fill="#61afef"/><rect x="26" y="118" width="1" height="2" fill="#abb2bf"/><rect x="27" y="118" width="12" height="2" fill="#e06c75"/><rect x="39" y="118" width="1" height="2" fill="#abb2bf"/><rect x="40" y="118" width="1" height="2" fill="#abb2bf"/><rect x="4" y="122" width="5" height="2" fill="#c678dd"/><rect x="10" y="122" width="1" height="2" fill="#abb2bf"/><rect x="11" y="122" width="1" height="2" fill="#c678dd"/><rect x="12" y="122" width="21" height="2" fill="#61afef"/><rect x="33" y="122" width="1" height="2" fill="#abb2bf"/><rect x="34" y="122" width="6" height="2" fill="#e06c75"/><rect x="40" y="122" width="1" height="2" fill="#abb2bf"/><rect x="41" y="122" width="1" height="2" fill="#abb2bf"/><rect x="4" y="124" width="1" height="2" fill="#abb2bf"/><rect x="8" y="126" width="14" height="2" fill="#61afef"/><rect x="22" y="126" width="1" height="2" fill="#abb2bf"/><rect x="23" y="126" width="1" height="2" fill="#abb2bf"/><rect x="24" y="126" width="1" height="2" fill="#abb2bf"/><rect x="8" y="130" width="26" height="2" fill="#61afef"/><rect x="34" y="130" width="1" height="2" fill="#abb2bf"/><rect x="35" y="130" width="1" height="2" fill="#abb2bf"/><rect x="36" y="130" width="1" height="2" fill="#abb2bf"/><rect x="8" y="132" width="23" height="2" fill="#61afef"/><rect x="31" y="132" width="1" height="2" fill="#abb2bf"/><rect x="32" y="132" width="1" height="2" fill="#abb2bf"/><rect x="33" y="132" width="1" height="2" fill="#abb2bf"/><rect x="8" y="134" width="5" height="2" fill="#abb2bf"/><rect x="13" y="134" width="1" height="2" fill="#abb2bf"/><rect x="14" y="134" width="1" height="2" fill="#abb2bf"/><rect x="15" y="134" width="8" height="2" fill="#61afef"/><rect x="23" y="134" width="1" height="2" fill="#abb2bf"/><rect x="24" y="134" width="1" height="2" fill="#abb2bf"/><rect x="25" y="134" width="1" height="2" fill="#abb2bf"/><rect x="8" y="138" width="5" height="2" fill="#abb2bf"/><rect x="13" y="138" width="1" height="2" fill="#abb2bf"/><rect x="14" y="138" width="1" height="2" fill="#abb2bf"/><rect x="15" y="138" width="14" height="2" fill="#61afef"/><rect x="29" y="138" width="1" height="2" fill="#abb2bf"/><rect x="30" y="138" width="1" height="2" fill="#abb2bf"/><rect x="31" y="138" width="1" height="2" fill="#abb2bf"/><rect x="8" y="142" width="5" height="2" fill="#abb2bf"/><rect x="13" y="142" width="1" height="2" fill="#abb2bf"/><rect x="14" y="142" width="1" height="2" fill="#abb2bf"/><rect x="15" y="142" width="6" height="2" fill="#61afef"/><rect x="21" y="142" width="1" height="2" fill="#abb2bf"/><rect x="22" y="142" width="1" height="2" fill="#abb2bf"/><rect x="23" y="142" width="1" height="2" fill="#abb2bf"/><rect x="8" y="144" width="3" height="2" fill="#c678dd"/><rect x="12" y="144" width="9" height="2" fill="#e06c75"/><rect x="21" y="144" width="1" height="2" fill="#abb2bf"/><rect x="23" y="144" width="9" height="2" fill="#e06c75"/><rect x="32" y="144" width="1" height="2" fill="#abb2bf"/><rect x="8" y="146" width="22" height="2" fill="#61afef"/><rect x="30" y="146" width="1" height="2" fill="#abb2bf"/><rect x="31" y="146" width="6" height="2" fill="#e06c75"/><rect x="37" y="146" width="1" height="2" fill="#abb2bf"/><rect x="39" y="146" width="1" height="2" fill="#c678dd"/><rect x="40" y="146" width="9" height="2" fill="#e06c75"/><rect x="49" y="146" width="1" height="2" fill="#abb2bf"/><rect x="51" y="146" width="1" height="2" fill="#c678dd"/><rect x="52" y="146" width="9" height="2" fill="#e06c75"/><rect x="61" y="146" width="1" height="2" fill="#abb2bf"/><rect x="62" y="146" width="1" height="2" fill="#abb2bf"/><rect x="8" y="148" width="10" height="2" fill="#61afef"/><rect x="18" y="148" width="1" height="2" fill="#abb2bf"/><rect x="19" y="148" width="1" height="2" fill="#d19a66"/><rect x="20" y="148" width="1" height="2" fill="#abb2bf"/><rect x="22" y="148" width="1" height="2" fill="#d19a66"/><rect x="23" y="148" width="1" height="2" fill="#abb2bf"/><rect x="25" y="148" width="9" height="2" fill="#e06c75"/><rect x="34" y="148" width="1" height="2" fill="#abb2bf"/><rect x="36" y="148" width="9" height="2" fill="#e06c75"/><rect x="45" y="148" width="1" height="2" fill="#abb2bf"/><rect x="46" y="148" width="1" height="2" fill="#abb2bf"/><rect x="8" y="150" width="12" height="2" fill="#61afef"/><rect x="20" y="150" width="1" height="2" fill="#abb2bf"/><rect x="21" y="150" width="5" height="2" fill="#d19a66"/><rect x="26" y="150" width="1" height="2" fill="#abb2bf"/><rect x="28" y="150" width="5" height="2" fill="#d19a66"/><rect x="33" y="150" width="1" height="2" fill="#abb2bf"/><rect x="35" y="150" width="5" height="2" fill="#d19a66"/><rect x="40" y="150" width="1" height="2" fill="#abb2bf"/><rect x="42" y="150" width="5" height="2" fill="#d19a66"/><rect x="47" y="150" width="1" height="2" fill="#abb2bf"/><rect x="48" y="150" width="1" height="2" fill="#abb2bf"/><rect x="8" y="152" width="7" height="2" fill="#61afef"/><rect x="15" y="152" width="1" height="2" fill="#abb2bf"/><rect x="16" y="152" width="19" height="2" fill="#e06c75"/><rect x="35" y="152" width="1" height="2" fill="#abb2bf"/><rect x="36" y="152" width="1" height="2" fill="#abb2bf"/><rect x="8" y="154" width="32" height="2" fill="#61afef"/><rect x="40" y="154" width="1" height="2" fill="#abb2bf"/><rect x="41" y="154" width="5" height="2" fill="#abb2bf"/><rect x="46" y="154" width="1" height="2" fill="#abb2bf"/><rect x="47" y="154" width="1" height="2" fill="#abb2bf"/><rect x="48" y="154" width="11" height="2" fill="#61afef"/><rect x="59" y="154" width="1" height="2" fill="#abb2bf"/><rect x="60" y="154" width="1" height="2" fill="#abb2bf"/><rect x="61" y="154" width="1" height="2" fill="#abb2bf"/><rect x="62" y="154" width="1" height="2" fill="#abb2bf"/><rect x="8" y="158" width="2" height="2" fill="#c678dd"/><rect x="11" y="158" width="1" height="2" fill="#abb2bf"/><rect x="12" y="158" width="2" height="2" fill="#e06c75"/><rect x="14" y="158" width="1" height="2" fill="#abb2bf"/><rect x="15" y="158" width="11" height="2" fill="#e06c75"/><rect x="27" y="158" width="1" height="2" fill="#c678dd"/><rect x="29" y="158" width="32" height="2" fill="#e06c75"/><rect x="61" y="158" width="1" height="2" fill="#abb2bf"/><rect x="8" y="160" width="1" height="2" fill="#abb2bf"/><rect x="12" y="162" width="10" height="2" fill="#e5c07b"/><rect x="23" y="162" width="1" height="2" fill="#c678dd"/><rect x="24" y="162" width="22" height="2" fill="#e06c75"/><rect x="47" y="162" width="1" height="2" fill="#c678dd"/><rect x="49" y="162" width="21" height="2" fill="#61afef"/><rect x="70" y="162" width="1" height="2" fill="#abb2bf"/><rect x="71" y="162" width="1" height="2" fill="#abb2bf"/><rect x="72" y="162" width="1" height="2" fill="#abb2bf"/><rect x="12" y="164" width="5" height="2" fill="#abb2bf"/><rect x="17" y="164" width="1" height="2" fill="#abb2bf"/><rect x="18" y="164" width="1" height="2" fill="#abb2bf"/><rect x="19" y="164" width="21" height="2" fill="#61afef"/><rect x="40" y="164" width="1" height="2" fill="#abb2bf"/><rect x="41" y="164" width="1" height="2" fill="#abb2bf"/><rect x="42" y="164" width="1" height="2" fill="#abb2bf"/><rect x="12" y="166" width="5" height="2" fill="#abb2bf"/><rect x="17" y="166" width="1" height="2" fill="#abb2bf"/><rect x="18" y="166" width="1" height="2" fill="#abb2bf"/><rect x="19" y="166" width="28" height="2" fill="#61afef"/><rect x="47" y="166" width="1" height="2" fill="#abb2bf"/><rect x="48" y="166" width="1" height="2" fill="#abb2bf"/><rect x="49" y="166" width="1" height="2" fill="#abb2bf"/><rect x="12" y="168" width="22" height="2" fill="#61afef"/><rect x="34" y="168" width="1" height="2" fill="#abb2bf"/><rect x="35" y="168" width="22" height="2" fill="#e06c75"/><rect x="57" y="168" width="1" height="2" fill="#abb2bf"/><rect x="58" y="168" width="1" height="2" fill="#abb2bf"/><rect x="8" y="170" width="1" height="2" fill="#abb2bf"/><rect x="8" y="174" width="15" height="2" fill="#61afef"/><rect x="23" y="174" width="1" height="2" fill="#abb2bf"/><rect x="24" y="174" width="6" height="2" fill="#e06c75"/><rect x="30" y="174" width="1" height="2" fill="#abb2bf"/><rect x="31" y="174" width="1" height="2" fill="#abb2bf"/><rect x="4" y="176" width="1" height="2" fill="#abb2bf"/><rect x="4" y="180" width="26" height="2" fill="#61afef"/><rect x="30" y="180" width="1" height="2" fill="#abb2bf"/><rect x="31" y="180" width="1" height="2" fill="#abb2bf"/><rect x="32" y="180" width="1" height="2" fill="#abb2bf"/><rect x="4" y="182" width="23" height="2" fill="#61afef"/><rect x="27" y="182" width="1" height="2" fill="#abb2bf"/><rect x="28" y="182" width="1" height="2" fill="#abb2bf"/><rect x="29" y="182" width="1" height="2" fill="#abb2bf"/><rect x="4" y="184" width="5" height="2" fill="#abb2bf"/><rect x="9" y="184" width="1" height="2" fill="#abb2bf"/><rect x="10" y="184" width="1" height="2" fill="#abb2bf"/><rect x="11" y="184" width="14" height="2" fill="#61afef"/><rect x="25" y="184" width="1" height="2" fill="#abb2bf"/><rect x="26" y="184" width="1" height="2" fill="#abb2bf"/><rect x="27" y="184" width="1" height="2" fill="#abb2bf"/><rect x="4" y="188" width="17" height="2" fill="#61afef"/><rect x="21" y="188" width="1" height="2" fill="#abb2bf"/><rect x="22" y="188" width="6" height="2" fill="#e06c75"/><rect x="28" y="188" width="1" height="2" fill="#abb2bf"/><rect x="29" y="188" width="1" height="2" fill="#abb2bf"/><rect x="4" y="190" width="13" height="2" fill="#61afef"/><rect x="17" y="190" width="1" height="2" fill="#abb2bf"/><rect x="18" y="190" width="1" height="2" fill="#abb2bf"/><rect x="19" y="190" width="1" height="2" fill="#abb2bf"/><rect x="4" y="194" width="6" height="2" fill="#c678dd"/><rect x="11" y="194" width="1" height="2" fill="#d19a66"/><rect x="12" y="194" width="1" height="2" fill="#abb2bf"/><rect x="0" y="196" width="1" height="2" fill="#abb2bf"/></g><rect x="0" y="0" width="112" height="198" fill="url(#mmp)"/></svg><div class="a" style="left:1906px;top:92px;width:1px;height:669px;background:#3b3f47"></div><div class="a" style="left:1907px;top:196px;width:13px;height:2px;background:#4d78cc"></div>
<div id="panel" class="a"></div>
<span class="a" style="left:360px;top:774px;font-size:11px;color:#9da5b4;white-space:pre;transform:scaleX(0.884);transform-origin:0 0">PROBLEMS</span><span class="a" style="left:438px;top:774px;font-size:11px;color:#9da5b4;white-space:pre;transform:scaleX(0.907);transform-origin:0 0">OUTPUT</span><span class="a" style="left:503px;top:774px;font-size:11px;color:#e7e7e7;white-space:pre;transform:scaleX(0.935);transform-origin:0 0">TERMINAL</span><span class="a" style="left:578px;top:774px;font-size:11px;color:#9da5b4;white-space:pre;transform:scaleX(0.896);transform-origin:0 0">DEBUG CONSOLE</span><span class="a" style="left:688px;top:774px;font-size:11px;color:#9da5b4;white-space:pre;transform:scaleX(0.822);transform-origin:0 0">PORTS</span><div class="a" style="left:501px;top:790px;width:55px;height:1px;background:#e7e7e7"></div><svg class="a" style="left:1797px;top:771px" width="16" height="16" viewBox="0 0 16 16" fill="none" stroke="#c5c5c5" stroke-width="1.1"><path d="M8 1.5V14.5M1.5 8H14.5"/></svg><svg class="a" style="left:1815px;top:771px" width="16" height="16" viewBox="0 0 16 16" fill="none" stroke="#c5c5c5" stroke-width="1"><path d="M4.5 7L8 10.5L11.5 7"/></svg><svg class="a" style="left:1837px;top:771px" width="16" height="16" viewBox="0 0 16 16" fill="#c5c5c5"><circle cx="3" cy="8" r="1.1"/><circle cx="8" cy="8" r="1.1"/><circle cx="13" cy="8" r="1.1"/></svg><svg class="a" style="left:1863px;top:771px" width="16" height="16" viewBox="0 0 16 16" fill="none" stroke="#c5c5c5" stroke-width="1.1"><path d="M3 10.5L8 5.5L13 10.5"/></svg><svg class="a" style="left:1889px;top:771px" width="16" height="16" viewBox="0 0 16 16" fill="none" stroke="#c5c5c5" stroke-width="1.1"><path d="M3.5 3.5L12.5 12.5M12.5 3.5L3.5 12.5"/></svg><div class="term" style="top:805px">PS D:\Code\C++\CmakeTest\out\build\clang\Debug&gt; .</div><div class="a" style="left:347px;top:808px;width:8px;height:8px;border-radius:4px;background:#1c8bc0"></div><div class="term" style="top:821px">PS D:\Code\C++\CmakeTest\out\build\clang\Debug&gt; .</div><div class="term" style="top:837px">PS D:\Code\C++\CmakeTest\out\build\clang\Debug&gt; .</div><div class="term" style="top:853px">PS D:\Code\C++\CmakeTest\out\build\clang\Debug&gt; .</div><div class="term" style="top:869px">PS D:\Code\C++\CmakeTest\out\build\clang\Debug&gt; .</div><div class="term" style="top:885px">PS D:\Code\C++\CmakeTest\out\build\clang\Debug&gt; .</div><div class="a" style="left:347px;top:888px;width:8px;height:8px;border-radius:4px;background:#1c8bc0"></div><div class="term" style="top:901px">PS D:\Code\C++\CmakeTest\out\build\clang\Debug&gt; .<span style="color:#29b8db">"D:/Code/C++/CmakeTest/out/build/clang/Debug/CmakeTest.exe"</span></div><div class="a" style="left:347px;top:904px;width:8px;height:8px;border-radius:4px;background:#1c8bc0"></div><div class="term" style="top:917px">PS D:\Code\C++\CmakeTest\out\build\clang\Debug&gt; .<span style="color:#29b8db">"D:/Code/C++/CmakeTest/out/build/clang/Debug/CmakeTest.exe"</span></div><div class="a" style="left:347px;top:920px;width:8px;height:8px;border-radius:4px;border:1.5px solid #6e7480"></div><div class="a" style="left:1786px;top:797px;width:1px;height:231px;background:#3b3f47"></div><div class="a" style="left:1787px;top:804px;width:4px;height:18px;background:#1c8bc0"></div><div class="a" style="left:1787px;top:823px;width:4px;height:24px;background:#1c8bc0"></div><div class="a" style="left:1787px;top:848px;width:4px;height:12px;background:#1c8bc0"></div><div class="a" style="left:1787px;top:910px;width:4px;height:24px;background:#1c8bc0"></div><div class="a" style="left:1787px;top:934px;width:4px;height:11px;background:#5a5f69"></div><div class="a" style="left:1800px;top:796px;width:1px;height:232px;background:#3b3f47"></div><div class="a" style="left:1791px;top:804px;width:9px;height:1px;background:#3b3f47"></div><svg class="a" style="left:1811px;top:799px" width="16" height="16" viewBox="0 0 16 16" fill="none" stroke="#c5c5c5" stroke-width="1"><rect x="1.5" y="1.5" width="13" height="13" rx="1"/><path d="M4 4.5L7.5 8L4 11.5M7.5 11.5H12"/></svg><span class="a" style="left:1830px;top:800px;color:#cccccc;white-space:pre">pwsh</span><svg class="a" style="left:1811px;top:821px" width="16" height="16" viewBox="0 0 16 16" fill="none" stroke="#c5c5c5" stroke-width="1"><rect x="1.5" y="1.5" width="13" height="13" rx="1"/><path d="M4 4.5L7.5 8L4 11.5M7.5 11.5H12"/></svg><span class="a" style="left:1830px;top:822px;color:#cccccc;white-space:pre;transform:scaleX(0.97);transform-origin:0 0">CMake/Lau...</span><svg class="a" style="left:1811px;top:843px" width="16" height="16" viewBox="0 0 16 16" fill="none" stroke="#c5c5c5" stroke-width="1"><rect x="1.5" y="1.5" width="13" height="13" rx="1"/><path d="M4 4.5L7.5 8L4 11.5M7.5 11.5H12"/></svg><span class="a" style="left:1830px;top:844px;color:#cccccc;white-space:pre;transform:scaleX(0.97);transform-origin:0 0">CMake/Lau...</span>
<div id="status" class="a"></div>
<div class="a" style="left:0;top:1028px;width:34px;height:22px;background:#518bfc"></div><svg class="a" style="left:9px;top:1031px" width="16" height="16" viewBox="0 0 16 16" fill="none" stroke="#e8f0ff" stroke-width="1.1"><path d="M4 5L8 9.3L4.3 13.5M12.5 2L8.5 6L12.5 9.6"/></svg><svg class="a" style="left:42px;top:1032px" width="14" height="14" viewBox="0 0 14 14" fill="none" stroke="#9da5b4" stroke-width="1.1"><circle cx="7" cy="7" r="5.8"/><path d="M4.5 4.5L9.5 9.5M9.5 4.5L4.5 9.5"/></svg><span class="sb" style="left:59px">0</span><svg class="a" style="left:69px;top:1032px" width="14" height="14" viewBox="0 0 14 14" fill="none" stroke="#9da5b4" stroke-width="1.1"><path d="M7 1.5L13 12.5H1Z M7 5.5V9M7 10.2V11"/></svg><span class="sb" style="left:86px">0</span><svg class="a" style="left:109px;top:1032px" width="14" height="14" viewBox="0 0 14 14" fill="none" stroke="#9da5b4" stroke-width="1.1"><path d="M5 13L7 6L9 13M5.5 11H8.5M3 2.5a5.5 5.5 0 0 0 0 8M11 2.5a5.5 5.5 0 0 1 0 8M4.5 4a3 3 0 0 0 0 5M9.5 4a3 3 0 0 1 0 5"/><circle cx="7" cy="6" r="1"/></svg><span class="sb" style="left:125px">0</span><svg class="a" style="left:149px;top:1032px" width="14" height="14" viewBox="0 0 14 14" fill="none" stroke="#9da5b4" stroke-width="1.1"><path d="M2 12L8 6M3 2L6 5 5 6 2 3M9 2a3 3 0 0 0 3 3L12 4.5 10 6.5 7.5 4 9.5 2zM8 8L12 12"/></svg><span class="sb" style="left:166px;transform:scaleX(0.93);transform-origin:0 0">[Clang 18.1.8 x86_64...]</span><svg class="a" style="left:301px;top:1032px" width="14" height="14" viewBox="0 0 14 14" fill="none" stroke="#9da5b4" stroke-width="1.1"><circle cx="7" cy="7" r="2"/><path d="M7 1V3M7 11V13M1 7H3M11 7H13M2.8 2.8L4.2 4.2M9.8 9.8L11.2 11.2M2.8 11.2L4.2 9.8M9.8 4.2L11.2 2.8"/><circle cx="7" cy="7" r="4.2"/></svg><svg class="a" style="left:331px;top:1032px" width="14" height="14" viewBox="0 0 14 14" fill="none" stroke="#9da5b4" stroke-width="1.1"><path d="M2 12L8 6M3 2L6 5 5 6 2 3M9 2a3 3 0 0 0 3 3L12 4.5 10 6.5 7.5 4 9.5 2zM8 8L12 12"/></svg><span class="sb" style="left:349px">[[Default]]</span><span class="sb" style="left:418px">[[Targets In Preset]]</span><svg class="a" style="left:535px;top:1032px" width="14" height="14" viewBox="0 0 14 14" fill="none" stroke="#9da5b4" stroke-width="1.1"><ellipse cx="7" cy="8" rx="3.5" ry="4.5"/><path d="M4 5H10M1.5 8H3.5M10.5 8H12.5M2 3L4 5M12 3L10 5M2 13L4 11M12 13L10 11M5 2.5L6 3.5M9 2.5L8 3.5"/></svg><svg class="a" style="left:565px;top:1032px" width="14" height="14" viewBox="0 0 14 14" fill="none" stroke="#9da5b4" stroke-width="1.1"><path d="M3.5 2L11.5 7L3.5 12Z"/></svg><span class="sb" style="left:595px">[CmakeTest]</span><svg class="a" style="left:675px;top:1032px" width="14" height="14" viewBox="0 0 14 14" fill="none" stroke="#9da5b4" stroke-width="1.1"><path d="M2 12L8 6M3 2L6 5 5 6 2 3M9 2a3 3 0 0 0 3 3L12 4.5 10 6.5 7.5 4 9.5 2zM8 8L12 12"/></svg><span class="sb" style="left:692px">[[Default]]</span><svg class="a" style="left:761px;top:1032px" width="14" height="14" viewBox="0 0 14 14" fill="none" stroke="#9da5b4" stroke-width="1.1"><path d="M2 12L8 6M3 2L6 5 5 6 2 3M9 2a3 3 0 0 0 3 3L12 4.5 10 6.5 7.5 4 9.5 2zM8 8L12 12"/></svg><span class="sb" style="left:778px">[[Default]]</span><svg class="a" style="left:848px;top:1032px" width="14" height="14" viewBox="0 0 14 14" fill="none" stroke="#9da5b4" stroke-width="1.1"><path d="M1.5 4.5L7 2.5L12.5 4.5V10L7 12L1.5 10Z M1.5 4.5L7 6.5L12.5 4.5M7 6.5V12"/></svg><span class="sb" style="left:864px">Run CPack</span><svg class="a" style="left:936px;top:1032px" width="14" height="14" viewBox="0 0 14 14" fill="none" stroke="#9da5b4" stroke-width="1.1"><path d="M2 12L8 6M3 2L6 5 5 6 2 3M9 2a3 3 0 0 0 3 3L12 4.5 10 6.5 7.5 4 9.5 2zM8 8L12 12"/></svg><span class="sb" style="left:953px">[[Default]]</span><svg class="a" style="left:1023px;top:1032px" width="14" height="14" viewBox="0 0 14 14" fill="none" stroke="#9da5b4" stroke-width="1.1"><path d="M3.5 2L11.5 7L3.5 12Z"/></svg><span class="sb" style="left:1040px">Run Workflow</span><span class="sb" style="left:1568px">Ln 22, Col 6</span><span class="sb" style="left:1645px">Spaces: 4</span><span class="sb" style="left:1710px">UTF-8</span><span class="sb" style="left:1758px">LF</span><span class="sb" style="left:1785px">{ }</span><span class="sb" style="left:1804px">C++</span><span class="sb" style="left:1842px">Win32</span><svg class="a" style="left:1890px;top:1032px" width="14" height="14" viewBox="0 0 14 14" fill="none" stroke="#9da5b4" stroke-width="1.1"><path d="M3 10.5V6a4 4 0 0 1 8 0V10.5L12 11.5H2Z M5.5 12.5a1.5 1.5 0 0 0 3 0"/></svg>
<div class="a" style="left:461px;top:146px;width:520px;height:425px;background:#1a1a1a;border:1px solid #434549;box-shadow:0 0 6px rgba(0,0,0,0.35)"></div><div class="a" style="left:462px;top:147px;width:518px;height:30px;background:#ffffff"></div><svg class="a" style="left:470px;top:154px" width="15" height="13" viewBox="0 0 15 13"><rect x="0.5" y="0.5" width="14" height="12" fill="#f0f0f0" stroke="#8a8a8a"/><rect x="2" y="3" width="5" height="8" fill="#3d8a6a"/><rect x="2" y="3" width="5" height="3" fill="#4a7fb0"/><rect x="8" y="3" width="2" height="8" fill="#d8d8d8"/><rect x="11" y="3" width="2" height="4" fill="#6aa0c8"/></svg><span class="a" style="left:491px;top:154px;font-size:13px;color:#999999;white-space:pre;transform:scaleX(0.99);transform-origin:0 0">ImGui GLFW+OpenGL3 with docking example</span><div class="a" style="left:861px;top:161px;width:10px;height:1px;background:#7a7a7a"></div><div class="a" style="left:906px;top:156px;width:10px;height:10px;border:1px solid #7a7a7a"></div><svg class="a" style="left:951px;top:155px" width="12" height="12" viewBox="0 0 12 12" fill="none" stroke="#7a7a7a" stroke-width="1"><path d="M1 1L11 11M11 1L1 11"/></svg><div class="a" style="left:751px;top:306px;width:550px;height:593px;background:#0f0f0f;border:1px solid #3e3e47"></div><div class="a" style="left:751px;top:306px;width:550px;height:19px;background:#294a7a;border:1px solid #4b5c7d;border-bottom:none"></div><div class="a" style="left:752px;top:325px;width:548px;height:19px;background:#242424"></div><svg class="a" style="left:757px;top:311px" width="11" height="10" viewBox="0 0 11 10"><path d="M0.5 0.5H10.5L5.5 9.5Z" fill="#ffffff"/></svg><div class="a ig" style="left:777px;top:310px;line-height:14px">Dear ImGui Demo</div><div class="a ig" style="left:762px;top:329px;line-height:14px">Menu</div><div class="a ig" style="left:807px;top:329px;line-height:14px">Examples</div><div class="a ig" style="left:879px;top:329px;line-height:14px">Tools</div><div class="a ig" style="left:759px;top:353px;line-height:14px">dear imgui says hello! (1.90.7) (19070)</div><div class="a" style="left:756px;top:373px;width:541px;height:19px;background:#1f3958"></div><svg class="a" style="left:765px;top:378px" width="10" height="10" viewBox="0 0 10 10"><path d="M0.5 0.5L9 5L0.5 9.5Z" fill="#ffffff"/></svg><div class="a ig" style="left:784px;top:377px;line-height:14px">Help</div><div class="a" style="left:756px;top:396px;width:541px;height:19px;background:#1f3958"></div><svg class="a" style="left:765px;top:401px" width="10" height="10" viewBox="0 0 10 10"><path d="M0.5 0.5L9 5L0.5 9.5Z" fill="#ffffff"/></svg><div class="a ig" style="left:784px;top:400px;line-height:14px">Configuration</div><div class="a" style="left:756px;top:419px;width:541px;height:19px;background:#1f3958"></div><svg class="a" style="left:765px;top:424px" width="10" height="10" viewBox="0 0 10 10"><path d="M0.5 0.5L9 5L0.5 9.5Z" fill="#ffffff"/></svg><div class="a ig" style="left:784px;top:423px;line-height:14px">Window options</div><div class="a" style="left:756px;top:442px;width:541px;height:19px;background:#1f3958"></div><svg class="a" style="left:765px;top:447px" width="10" height="10" viewBox="0 0 10 10"><path d="M0.5 0.5L9 5L0.5 9.5Z" fill="#ffffff"/></svg><div class="a ig" style="left:784px;top:446px;line-height:14px">Widgets</div><div class="a" style="left:756px;top:465px;width:541px;height:19px;background:#1f3958"></div><svg class="a" style="left:765px;top:470px" width="10" height="10" viewBox="0 0 10 10"><path d="M0.5 0.5L9 5L0.5 9.5Z" fill="#ffffff"/></svg><div class="a ig" style="left:784px;top:469px;line-height:14px">Layout &amp; Scrolling</div><div class="a" style="left:756px;top:488px;width:541px;height:19px;background:#1f3958"></div><svg class="a" style="left:765px;top:493px" width="10" height="10" viewBox="0 0 10 10"><path d="M0.5 0.5L9 5L0.5 9.5Z" fill="#ffffff"/></svg><div class="a ig" style="left:784px;top:492px;line-height:14px">Popups &amp; Modal windows</div><div class="a" style="left:756px;top:511px;width:541px;height:19px;background:#1f3958"></div><svg class="a" style="left:765px;top:516px" width="10" height="10" viewBox="0 0 10 10"><path d="M0.5 0.5L9 5L0.5 9.5Z" fill="#ffffff"/></svg><div class="a ig" style="left:784px;top:515px;line-height:14px">Tables &amp; Columns</div><div class="a" style="left:756px;top:534px;width:541px;height:19px;background:#1f3958"></div><svg class="a" style="left:765px;top:539px" width="10" height="10" viewBox="0 0 10 10"><path d="M0.5 0.5L9 5L0.5 9.5Z" fill="#ffffff"/></svg><div class="a ig" style="left:784px;top:538px;line-height:14px">Inputs &amp; Focus</div><svg class="a" style="left:1287px;top:885px" width="13" height="13" viewBox="0 0 13 13"><path d="M13 0V13H0Z" fill="#1c2c44"/></svg>
</body></html>
